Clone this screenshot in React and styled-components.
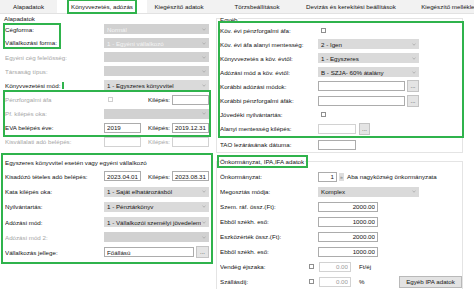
import React from 'react';
import styled, { createGlobalStyle, css } from 'styled-components';

const green = '#2fb34c';

const GlobalStyle = createGlobalStyle`
  html, body { margin: 0; padding: 0; background: #fff; }
  body {
    font-family: "Liberation Sans", Arial, sans-serif;
    font-size: 6.2px;
    color: #141414;
  }
  * { box-sizing: border-box; }
`;

const Window = styled.div`
  width: 474px;
  height: 289px;
  overflow: hidden;
  background: #fff;
`;

const TabBar = styled.div`
  display: flex;
  height: 14px;
  background: #f2f2f2;
  border-bottom: 1px solid #e2e2e2;
`;

const Tab = styled.div`
  flex: 0 0 ${p => p.w}px;
  display: flex;
  align-items: center;
  justify-content: center;
  white-space: nowrap;
  ${p => p.active && css`background: #fff;`}
`;

const TabText = styled.span`
  line-height: 7px;
  ${p => p.marked && css`
    outline: 2px solid ${green};
    outline-offset: 2px;
  `}
`;

const Body = styled.div`
  display: flex;
  align-items: flex-start;
`;

const LeftCol = styled.div`
  flex: 0 0 213px;
  padding: 2px 4px 0 5px;
  display: flex;
  flex-direction: column;
`;

const SectionTitle = styled.div`
  line-height: 6px;
  height: 6px;
  margin-left: -1px;
`;

const Row = styled.div`
  display: flex;
  align-items: center;
  flex: 0 0 ${p => p.h || 14.1}px;
  height: ${p => p.h || 14.1}px;
  white-space: nowrap;
`;

const Label = styled.div`
  flex: 0 0 ${p => p.w || 99}px;
  line-height: 7px;
  overflow: hidden;
  white-space: nowrap;
  color: ${p => (p.off ? '#a6a6a6' : '#141414')};
`;

const Mark = styled.span`
  outline: 2px solid ${green};
  outline-offset: 1px;
  padding-right: 1px;
`;

const Split = styled.div`
  display: flex;
`;

const LabelStack = styled.div`
  flex: 0 0 99px;
  display: flex;
  align-items: flex-start;
`;

const LabelFrame = styled.div`
  margin-top: 3px;
  height: 22.2px;
  padding: 1px 2px 1px 0;
  display: flex;
  flex-direction: column;
  justify-content: space-between;
  line-height: 7px;
  outline: 2px solid ${green};
  outline-offset: 0;
`;

const FieldStack = styled.div`
  display: flex;
  flex-direction: column;
`;

const Box = styled.div`
  display: flex;
  flex-direction: column;
  outline: 2px solid ${green};
  outline-offset: ${p => p.offset || 0}px;
  margin-top: ${p => p.mt || 0}px;
`;

const Heading = styled.div`
  height: ${p => p.h}px;
  display: flex;
  align-items: center;
  line-height: 7px;
`;

const Combo = styled.div`
  flex: 0 0 ${p => p.w || 105}px;
  width: ${p => p.w || 105}px;
  height: 10px;
  display: flex;
  align-items: center;
  padding: 0 3px;
  background: ${p => (p.off ? '#d1d1d1' : '#dadada')};
  color: ${p => (p.off ? '#f4f4f4' : '#141414')};
  overflow: hidden;
  span {
    flex: 1;
    overflow: hidden;
    white-space: nowrap;
  }
  svg {
    flex: 0 0 4px;
    margin-left: 1px;
  }
`;

const Field = styled.input`
  flex: 0 0 ${p => p.w}px;
  width: ${p => p.w}px;
  height: 10px;
  margin: 0;
  padding: 0 2px;
  border: 1px solid ${p => (p.faint ? '#d2d2d2' : '#acacac')};
  border-radius: 0;
  background: #fff;
  font: inherit;
  color: ${p => (p.muted ? '#9c9c9c' : '#141414')};
  text-align: ${p => (p.right ? 'right' : 'left')};
  outline: none;
`;

const Check = styled.span`
  flex: 0 0 5px;
  width: 5px;
  height: 5px;
  border: 1px solid ${p => (p.off ? '#cfcfcf' : '#8f8f8f')};
  background: #fff;
  margin-left: ${p => p.ml || 0}px;
  margin-right: ${p => p.mr || 0}px;
`;

const Slot = styled.div`
  flex: 0 0 ${p => p.w}px;
  display: flex;
  align-items: center;
`;

const Dots = styled.button`
  flex: 0 0 ${p => p.w || 12}px;
  width: ${p => p.w || 12}px;
  height: 12px;
  margin: 0 0 0 ${p => p.ml || 2}px;
  padding: 0 0 2px;
  border: 1px solid #c4c4c4;
  background: #e4e4e4;
  font: inherit;
  font-size: 6px;
  line-height: 1;
  color: #333;
  display: flex;
  align-items: flex-end;
  justify-content: center;
`;

const Arrow = styled.span`
  flex: 0 0 5px;
  height: 8px;
  margin: 0 3px 0 2px;
  background: #dedede;
  color: #777;
  font-size: 5px;
  display: flex;
  align-items: center;
  justify-content: center;
`;

const Text = styled.span`
  margin-left: ${p => p.ml || 0}px;
  color: #141414;
`;

const RightCol = styled.div`
  flex: 0 0 247px;
  margin-left: 3px;
  display: flex;
  flex-direction: column;
`;

const Group = styled.fieldset`
  margin: ${p => p.mt || 0}px 0 0 0;
  padding: 0 0 0 3px;
  border: 1px solid #e4e4e4;
  min-width: 0;
  display: flex;
  flex-direction: column;
`;

const Legend = styled.legend`
  padding: ${p => p.pt || 0}px 0 0 0;
  line-height: 7px;
  ${p => p.marked && css`
    span {
      outline: 2px solid ${green};
      outline-offset: 1px;
      padding-right: 1px;
    }
  `}
`;

const Rows = styled.div`
  display: flex;
  flex-direction: column;
  padding-top: ${p => p.pt || 0}px;
`;

const IpaButton = styled.button`
  margin: 0 0 0 auto;
  width: 63px;
  height: 12px;
  padding: 0;
  border: 1px solid #b9b9b9;
  background: #e3e3e3;
  font: inherit;
  color: #141414;
`;

const Chevron = () => (
  <svg width="4" height="3" viewBox="0 0 4 3">
    <path d="M0.5 0.8 L2 2.2 L3.5 0.8" fill="none" stroke="#a0a0a0" strokeWidth="0.7" />
  </svg>
);

const Select = ({ children, off, w }) => (
  <Combo off={off} w={w}>
    <span>{children}</span>
    <Chevron />
  </Combo>
);

const tabs = [
  { name: 'Alapadatok', w: 57 },
  { name: 'Könyvvezetés, adózás', w: 90, active: true },
  { name: 'Kiegészítő adatok', w: 64 },
  { name: 'Törzsbeállítások', w: 92 },
  { name: 'Devizás és kerekítési beállítások', w: 96 },
  { name: 'Kiegészítő mellékletek', w: 106 },
];

export default function App() {
  return (
    <>
      <GlobalStyle />
      <Window>
        <TabBar>
          {tabs.map(t => (
            <Tab key={t.name} w={t.w} active={t.active}>
              <TabText marked={t.active}>{t.name}</TabText>
            </Tab>
          ))}
        </TabBar>

        <Body>
          <LeftCol>
            <SectionTitle>Alapadatok</SectionTitle>
            <Split>
              <LabelStack>
                <LabelFrame>
                  <span>Cégforma:</span>
                  <span>Vállalkozási forma:</span>
                </LabelFrame>
              </LabelStack>
              <FieldStack>
                <Row><Select off>Normál</Select></Row>
                <Row><Select off>1 - Egyéni vállalkozó</Select></Row>
              </FieldStack>
            </Split>
            <Row>
              <Label off>Egyéni cég felelősség:</Label>
              <Select off />
            </Row>
            <Row>
              <Label off>Társaság típus:</Label>
              <Select off />
            </Row>
            <Row>
              <Label><Mark>Könyvvezetési mód:</Mark></Label>
              <Select>1 - Egyszeres könyvvitel</Select>
            </Row>

            <Box>
              <Row>
                <Label off>Pénzforgalmi áfa</Label>
                <Slot w={44}><Check off ml={4} /></Slot>
                <Label w={24}>Kilépés:</Label>
                <Field w={37} readOnly defaultValue="" />
              </Row>
              <Row>
                <Label off>Pf. kilépés oka:</Label>
                <Select off />
              </Row>
              <Row>
                <Label>EVA belépés éve:</Label>
                <Slot w={44}><Field w={37} readOnly defaultValue="2019" /></Slot>
                <Label w={24}>Kilépés:</Label>
                <Field w={37} readOnly defaultValue="2019.12.31" />
              </Row>
            </Box>
            <Row>
              <Label off>Kisvállalati adó belépés:</Label>
              <Slot w={44}><Field w={37} faint readOnly defaultValue="" /></Slot>
              <Label off w={24}>Kilépés:</Label>
              <Field w={37} faint readOnly defaultValue="" />
            </Row>

            <Box offset={2} mt={8}>
              <Heading h={12}>Egyszeres könyvvitel esetén vagy egyéni vállalkozó</Heading>
              <Row h={15.2}>
                <Label>Kisadózó tételes adó belépés:</Label>
                <Slot w={44}><Field w={37} readOnly defaultValue="2023.04.01" /></Slot>
                <Label w={24}>Kilépés:</Label>
                <Field w={37} readOnly defaultValue="2023.08.31" />
              </Row>
              <Row h={15.2}>
                <Label>Kata kilépés oka:</Label>
                <Select>1 - Saját elhatározásból</Select>
              </Row>
              <Row h={15.2}>
                <Label>Nyilvántartás:</Label>
                <Select>1 - Pénztárkönyv</Select>
              </Row>
              <Row h={15.2}>
                <Label>Adózási mód:</Label>
                <Select>1 - Vállalkozói személyi jövedelemadó</Select>
              </Row>
              <Row h={15.2}>
                <Label off>Adózási mód 2:</Label>
                <Select off />
              </Row>
              <Row h={15.2}>
                <Label>Vállalkozás jellege:</Label>
                <Field w={90} readOnly defaultValue="Főállású" />
                <Dots w={13} ml={2}>...</Dots>
              </Row>
            </Box>
          </LeftCol>

          <RightCol>
            <Group>
              <Legend pt={2}>Egyéb</Legend>
              <Box>
                <Row h={14.1}>
                  <Label w={98}>Köv. évi pénzforgalmi áfa:</Label>
                  <Check ml={3} />
                </Row>
                <Row h={14.1}>
                  <Label w={98}>Köv. évi áfa alanyi mentesség:</Label>
                  <Select w={101}>2 - Igen</Select>
                </Row>
                <Row h={14.1}>
                  <Label w={98}>Könyvvezetés a köv. évtől:</Label>
                  <Select w={101}>1 - Egyszeres</Select>
                </Row>
                <Row h={14.1}>
                  <Label w={98}>Adózási mód a köv. évtől:</Label>
                  <Select w={101}>B - SZJA- 60% átalány</Select>
                </Row>
                <Row h={14.1}>
                  <Label w={98}>Korábbi adózási módok:</Label>
                  <Field w={87} readOnly defaultValue="" />
                  <Dots>...</Dots>
                </Row>
                <Row h={14.1}>
                  <Label w={98}>Korábbi pénzforgalmi áfák:</Label>
                  <Field w={87} readOnly defaultValue="" />
                  <Dots>...</Dots>
                </Row>
                <Row h={14.1}>
                  <Label w={98}>Jövedéki nyilvántartás:</Label>
                  <Check ml={3} />
                </Row>
                <Row h={14.1} style={{ width: 207 }}>
                  <Label w={98}>Alanyi mentesség kilépés:</Label>
                  <Field w={38} faint readOnly defaultValue="" />
                  <Dots w={11} ml={3}>...</Dots>
                </Row>
              </Box>
              <Rows pt={2}>
                <Row h={14}>
                  <Label w={98}>TAO lezárásának dátuma:</Label>
                  <Field w={38} readOnly defaultValue="" />
                </Row>
              </Rows>
            </Group>

            <Group mt={5.5}>
              <Legend marked><span>Önkormányzat, IPA,IFA adatok</span></Legend>
              <Rows pt={4}>
                <Row h={15}>
                  <Label w={98}>Önkormányzat:</Label>
                  <Field w={19} right readOnly defaultValue="1" />
                  <Arrow>»</Arrow>
                  <Text>Aba nagyközség önkormányzata</Text>
                </Row>
                <Row h={15}>
                  <Label w={98}>Megosztás módja:</Label>
                  <Select w={101}>Komplex</Select>
                </Row>
                <Row h={15}>
                  <Label w={98}>Szem. ráf. össz.(Ft):</Label>
                  <Field w={60} right readOnly defaultValue="2000.00" />
                </Row>
                <Row h={15}>
                  <Label w={98}>Ebből székh. eső:</Label>
                  <Field w={60} right readOnly defaultValue="1000.00" />
                </Row>
                <Row h={15}>
                  <Label w={98}>Eszközérték össz.(Ft):</Label>
                  <Field w={60} right readOnly defaultValue="2000.00" />
                </Row>
                <Row h={15}>
                  <Label w={98}>Ebből székh. eső:</Label>
                  <Field w={60} right readOnly defaultValue="1000.00" />
                </Row>
                <Row h={15}>
                  <Label w={89}>Vendég éjszaka:</Label>
                  <Check mr={5} />
                  <Field w={32} right muted faint readOnly defaultValue="0.00" />
                  <Text ml={8}>Ft/éj</Text>
                </Row>
                <Row h={15}>
                  <Label w={89}>Szállásdíj:</Label>
                  <Check mr={5} />
                  <Field w={32} right muted faint readOnly defaultValue="0.00" />
                  <Text ml={8}>%</Text>
                  <IpaButton>Egyéb IPA adatok</IpaButton>
                </Row>
              </Rows>
            </Group>
          </RightCol>
        </Body>
      </Window>
    </>
  );
}
